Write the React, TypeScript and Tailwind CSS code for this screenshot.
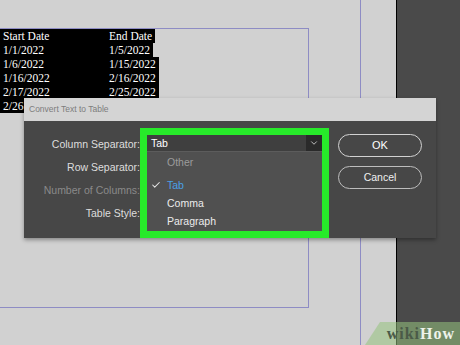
import { Check, ChevronDown } from "lucide-react";

const rows = [
  { a: "Start Date", b: "End Date", w: "w-[155px]" },
  { a: "1/1/2022", b: "1/5/2022", w: "w-[153px]" },
  { a: "1/6/2022", b: "1/15/2022", w: "w-[159px]" },
  { a: "1/16/2022", b: "2/16/2022", w: "w-[159px]" },
  { a: "2/17/2022", b: "2/25/2022", w: "w-[159px]" },
  { a: "2/26", b: "", w: "w-[159px]" },
];

const labels = [
  { text: "Column Separator:", dim: false },
  { text: "Row Separator:", dim: false },
  { text: "Number of Columns:", dim: true },
  { text: "Table Style:", dim: false },
];

export default function App() {
  return (
    <div className="relative w-[460px] h-[345px] overflow-hidden bg-[#d1d1d1] flex font-['Liberation_Sans',Arial,sans-serif]">
      {/* Page canvas */}
      <div className="w-[396px] flex items-start">
        <div className="w-[309px] h-[280px] mt-[28px] border-t border-r border-b border-[#8e8cc4]">
          {/* Selected text frame */}
          <div className="flex flex-col font-['Liberation_Serif','Times_New_Roman',serif] text-[11.5px] leading-[14px] text-white">
            {rows.map((r) => (
              <div key={r.a} className={`${r.w} h-[14px] bg-black grid grid-cols-[106px_auto] pl-[3px]`}>
                <span>{r.a}</span>
                <span>{r.b}</span>
              </div>
            ))}
          </div>
        </div>
        <div className="ml-[51px] w-px self-stretch bg-[#8e8cc4]" />
      </div>
      <div className="w-px bg-black" />
      <div className="flex-1 bg-[#4a4a4a]" />

      {/* Convert Text to Table dialog */}
      <div className="absolute left-[24px] top-[98px] w-[412px] shadow-[0_2px_4px_rgba(0,0,0,0.35)]">
        <div className="h-[23px] bg-[#d4d4d4] pl-[5px] text-[8.5px] leading-[23px] text-[#7d7d7d]">
          Convert Text to Table
        </div>
        <div className="h-[117px] bg-[#474747] flex">
          <div className="w-[116px] pt-[12px] flex flex-col items-end text-[10.5px]">
            {labels.map((l) => (
              <div
                key={l.text}
                className={`h-[23px] leading-[23px] ${l.dim ? "text-[#8a8a8a]" : "text-[#dedede]"}`}
              >
                {l.text}
              </div>
            ))}
          </div>

          {/* Highlighted dropdown */}
          <div className="mt-[7px] w-[189px] h-[110px] border-[7px] border-[#27ea2a] flex flex-col">
            <div className="h-[17px] flex bg-[#3f3f3f] border-b border-[#5c5c5c]">
              <span className="flex-1 pl-[4px] text-[10.5px] leading-[17px] text-white">Tab</span>
              <span className="w-[16px] bg-[#2a2a2a] flex items-center justify-center">
                <ChevronDown className="w-[10px] h-[10px] text-[#d8d8d8]" strokeWidth={2} />
              </span>
            </div>
            <div className="flex-1 bg-[#505050] pt-[1px] text-[10.5px] leading-[18px]">
              <div className="h-[18px] pl-[20px] text-[#9c9c9c]">Other</div>
              <div className="h-[18px] mt-[5px] pl-[4px] flex items-center text-[#4aa0e6]">
                <Check className="w-[10px] h-[10px] text-[#e6e6e6] mr-[6px]" strokeWidth={2.5} />
                Tab
              </div>
              <div className="h-[18px] pl-[20px] text-[#ececec]">Comma</div>
              <div className="h-[18px] pl-[20px] text-[#ececec]">Paragraph</div>
            </div>
          </div>

          <div className="ml-[9px] pt-[13px] flex flex-col gap-[9px]">
            <button className="w-[84px] h-[23px] rounded-full border-[1.5px] border-[#d2d2d2] text-[11px] text-white">
              OK
            </button>
            <button className="w-[84px] h-[23px] rounded-full border-[1.5px] border-[#bdbdbd] text-[10.5px] text-[#f0f0f0]">
              Cancel
            </button>
          </div>
        </div>
      </div>

      {/* wikiHow watermark */}
      <div className="absolute right-0 bottom-0 w-[95px] h-[23px] bg-[rgba(150,195,125,0.55)] [clip-path:polygon(15px_0,100%_0,100%_100%,0_100%)] flex items-center justify-end pr-[5px] font-['Liberation_Serif',serif] font-bold text-[16px] tracking-[1px]">
        <span className="text-[#4b5a48]">wiki</span>
        <span className="text-[#eef3ea]">How</span>
      </div>
    </div>
  );
}
